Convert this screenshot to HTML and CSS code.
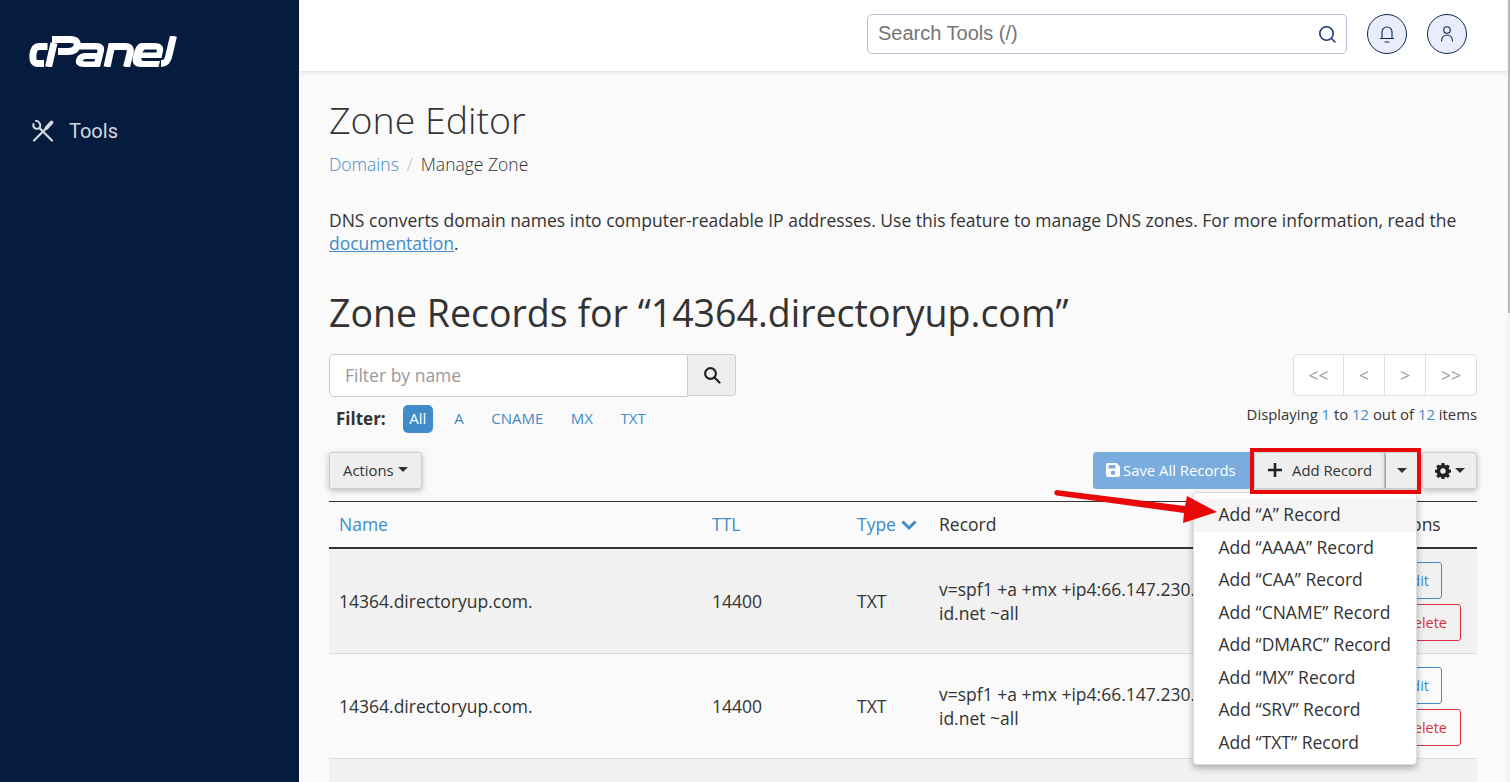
FILE: index.html
```html
<!DOCTYPE html>
<html lang="en">
<head>
<meta charset="utf-8">
<title>Zone Editor</title>
<link rel="stylesheet" href="styles.css">
</head>
<body>
<div class="app">
  <aside class="sidebar">
    <div class="logo">
      <svg width="148" height="31" viewBox="0 0 148 31" fill="none" stroke="#fff" stroke-width="7">
        <path d="M18.500 10.500H10C6 10.500 4.500 13.500 3.900 19C3.500 25 5 27.500 9 27.500H15"/>
        <path d="M19.500 31 25 7"/>
        <path d="M23 3.500H41C47 3.500 49 6 48 10C47 13.500 44 15.500 39 15.500H29"/>
        <path stroke="none" fill="#fff" fill-rule="evenodd" d="M50 7H67C73 7 76 10 75 15L71 31H55C49 31 46 28 47 24C48 19.500 52 17 57 17H68L68.500 15C68.700 14 68 13.500 67 13.500H48.500ZM57 23C55 23 54 23.800 54 24.500C54 25 54.500 25.500 56 25.500H65.500L66 23Z"/>
        <path d="M78 31 82.500 10.500H96C101 10.500 102 13 101 17L97.500 31"/>
        <path stroke="none" fill="#fff" fill-rule="evenodd" d="M113 7H125C132 7 135 10 134 15L132.500 22H112.500C112 24 113 25 115 25H131L129.500 31H112C105 31 102.500 27 104 20C106 11 109 7 113 7ZM113.500 16.500H127.500L127.800 15C128 14 127.500 13.500 126 13.500H116.500C115 13.500 114 15 113.500 16.500Z"/>
        <path d="M144.500 0 140 19C139 25 137 27.500 132 27.500"/>
      </svg>
    </div>
    <nav class="nav-item">
      <svg class="nav-icon" width="24" height="24" viewBox="0 0 24 24" fill="none" stroke="#d5d9e0" stroke-width="2.200" stroke-linecap="round">
        <path d="M8.500 9 21 21.500"/>
        <path d="M2.500 5C1.500 8.500 5 11 8.500 9.200C10.500 6 8.500 2 5 1.800" stroke-width="2"/>
        <path d="M3 21.500 15 9.500"/>
        <path d="M15.500 9 20.500 3.500" stroke-width="3.800"/>
      </svg>
      <span class="nav-label">Tools</span>
    </nav>
  </aside>
  <div class="main">
    <header class="topbar">
      <div class="search-tools">
        <span class="search-text">Search Tools (/)</span>
        <svg width="20" height="20" viewBox="0 0 20 20" fill="none" stroke="#1d3a73" stroke-width="1.600" stroke-linecap="round"><circle cx="9.500" cy="9.500" r="6.700"/><path d="m14.500 14.500 3.500 3.500"/></svg>
      </div>
      <div class="round-btn">
        <svg width="18" height="20" viewBox="0 0 18 20" fill="none" stroke="#10284f" stroke-width="1.100" stroke-linecap="round"><path d="M4 14V8a5 5 0 0 1 10 0v6M2.500 14.500h13M7 18h4"/></svg>
      </div>
      <div class="round-btn">
        <svg width="18" height="20" viewBox="0 0 18 20" fill="none" stroke="#10284f" stroke-width="1.100" stroke-linecap="round"><circle cx="9" cy="6" r="3.300"/><path d="M3.500 17c.3-4 2.500-6 5.500-6s5.200 2 5.500 6"/></svg>
      </div>
    </header>
    <main class="content">
      <h1 class="page-title">Zone Editor</h1>
      <div class="breadcrumb"><a class="crumb-link">Domains</a><span class="crumb-sep">/</span><span>Manage Zone</span></div>
      <p class="intro">DNS converts domain names into computer-readable IP addresses. Use this feature to manage DNS zones. For more information, read the <a class="doc-link">documentation</a>.</p>
      <h2 class="zone-title">Zone Records for “14364.directoryup.com”</h2>

      <div class="filter-row">
        <div class="filter-left">
          <div class="filter-input-group">
            <div class="filter-input">Filter by name</div>
            <div class="filter-search">
              <svg width="18" height="18" viewBox="0 0 18 18" fill="none" stroke="#222" stroke-width="2.200" stroke-linecap="round"><circle cx="7.500" cy="7.500" r="5.400"/><path d="m11.500 11.500 5 5"/></svg>
            </div>
          </div>
          <div class="filter-types">
            <strong class="filter-label">Filter:</strong>
            <span class="pill active">All</span>
            <span class="pill">A</span>
            <span class="pill">CNAME</span>
            <span class="pill">MX</span>
            <span class="pill">TXT</span>
          </div>
        </div>
        <div class="filter-right">
          <div class="pager"><span>&lt;&lt;</span><span>&lt;</span><span>&gt;</span><span>&gt;&gt;</span></div>
          <div class="displaying">Displaying <span class="num">1</span> to <span class="num">12</span> out of <span class="num">12</span> items</div>
        </div>
      </div>

      <div class="toolbar">
        <button class="btn shadow">Actions <i class="caret"></i></button>
        <div class="toolbar-right">
          <button class="btn btn-save">
            <svg width="14" height="14" viewBox="0 0 14 14"><path fill="#fff" fill-rule="evenodd" d="M2 0h8.500L14 3.500V12a2 2 0 0 1-2 2H2a2 2 0 0 1-2-2V2a2 2 0 0 1 2-2zm.5 2v3.500h7V2zM7 7.500a2.200 2.200 0 1 0 0 4.400 2.200 2.200 0 0 0 0-4.400z"/></svg>
            Save All Records
          </button>
          <div class="add-group">
            <button class="btn btn-add">
              <svg width="14" height="14" viewBox="0 0 14 14"><path fill="#222" d="M5.700 0h2.600v5.700H14v2.600H8.300V14H5.700V8.300H0V5.700h5.700z"/></svg>
              <span>Add Record</span>
            </button>
            <button class="btn btn-split"><i class="caret"></i></button>
          </div>
          <button class="btn btn-gear shadow">
            <svg width="16" height="16" viewBox="0 0 16 16"><path fill="#222" fill-rule="evenodd" d="M6.600 0h2.800l.4 2.100 1.200.5L12.800 1.400l2 2-1.200 1.800.5 1.200 2 .4v2.800l-2 .4-.5 1.200 1.200 1.800-2 2-1.800-1.200-1.200.5-.4 2.100H6.600l-.4-2.100-1.200-.5-1.800 1.200-2-2 1.200-1.800-.5-1.200-2-.4V6.800l2-.4.500-1.200L1.200 3.400l2-2L5 2.600l1.200-.5zM8 5.300a2.700 2.700 0 1 0 0 5.400 2.700 2.700 0 0 0 0-5.400z"/></svg>
            <i class="caret"></i>
          </button>
        </div>
      </div>

      <table class="records">
        <colgroup><col class="c-name"><col class="c-ttl"><col class="c-type"><col class="c-rec"><col class="c-act"></colgroup>
        <thead>
          <tr>
            <th class="link">Name</th>
            <th class="link">TTL</th>
            <th class="link">Type <svg width="16" height="12" viewBox="0 0 16 12" class="chev"><path fill="none" stroke="#428bca" stroke-width="3" d="m1.500 2.500 6.500 6.500 6.500-6.500"/></svg></th>
            <th>Record</th>
            <th class="th-act">Actions</th>
          </tr>
        </thead>
        <tbody>
          <tr class="odd">
            <td>14364.directoryup.com.</td><td>14400</td><td>TXT</td>
            <td>v=spf1 +a +mx +ip4:66.147.230.18 +include:spf.<br>id.net ~all</td>
            <td class="acts"><span class="mini edit">Edit</span><span class="mini del">Delete</span></td>
          </tr>
          <tr>
            <td>14364.directoryup.com.</td><td>14400</td><td>TXT</td>
            <td>v=spf1 +a +mx +ip4:66.147.230.18 +include:spf.<br>id.net ~all</td>
            <td class="acts"><span class="mini edit">Edit</span><span class="mini del">Delete</span></td>
          </tr>
          <tr class="odd">
            <td></td><td></td><td></td><td></td>
            <td class="acts"><span class="mini edit"></span></td>
          </tr>
        </tbody>
      </table>

      <div class="menu">
        <div class="menu-item hover">Add “A” Record</div>
        <div class="menu-item">Add “AAAA” Record</div>
        <div class="menu-item">Add “CAA” Record</div>
        <div class="menu-item">Add “CNAME” Record</div>
        <div class="menu-item">Add “DMARC” Record</div>
        <div class="menu-item">Add “MX” Record</div>
        <div class="menu-item">Add “SRV” Record</div>
        <div class="menu-item">Add “TXT” Record</div>
      </div>
      <div class="highlight-box"></div>
      <svg class="arrow" width="170" height="40" viewBox="0 0 170 40"><path fill="#e90808" d="M2.500 1 131 17l2-10 30 16-34 11 1-10L2.500 6.500a2.800 2.800 0 0 1 0-5.500z"/></svg>
    </main>
    <div class="scroll-track"><div class="scroll-thumb"></div></div>
  </div>
</div>
</body>
</html>
```
FILE: styles.css
```css
* { box-sizing: border-box; }
html, body { margin: 0; height: 100%; overflow: hidden; }
body { font-family: "Open Sans", sans-serif; color: #333; background: #fafafa; }
.app { display: flex; height: 782px; }
.sidebar { width: 299px; flex: none; background: #061c3f; padding: 36px 0 0 29px; }
.logo { height: 31px; display: flex; }
.nav-item { display: flex; align-items: center; margin-top: 52px; }
.nav-icon { margin-left: 2px; }
.nav-label { margin-left: 14px; font: 20px Roboto, sans-serif; color: #d5d9e0; }
.main { flex: 1; min-width: 0; position: relative; overflow: hidden; }
.scroll-track { position: absolute; top: 0; right: 0; bottom: 0; width: 3px; background: #f4f4f4; z-index: 6; }
.scroll-thumb { margin-left: 1px; height: 313px; background: #b9b9b9; }
.topbar { height: 71px; background: #fff; box-shadow: 0 1px 4px rgba(0,0,0,.12); display: flex; align-items: center; justify-content: flex-end; padding: 0 43px 4px 0; gap: 20px; position: relative; z-index: 2; }
.search-tools { width: 480px; height: 40px; border: 1px solid #b4bfd6; border-radius: 5px; display: flex; align-items: center; justify-content: space-between; padding: 0 9px 0 10px; }
.search-text { font: 20px "Liberation Sans", sans-serif; color: #757575; }
.round-btn { width: 40px; height: 40px; border-radius: 50%; border: 1px solid #10284f; background: #e9edfb; display: flex; align-items: center; justify-content: center; }
.content { padding: 23px 33px 0 30px; position: relative; }
.page-title { margin: 0; font-size: 37.500px; font-weight: 300; line-height: 52px; height: 52px; }
.breadcrumb { margin-top: 6px; font-size: 17.500px; font-weight: 300; line-height: 24px; }
.crumb-link { color: #428bca; }
.crumb-sep { color: #bbb; margin: 0 8px; }
.intro { margin: 33px 0 0; font-size: 17.500px; line-height: 23px; height: 46px; }
.doc-link { color: #428bca; text-decoration: underline; }
.zone-title { margin: 32px 0 0; font-size: 37.500px; font-weight: 400; line-height: 52px; }
.filter-row { display: flex; justify-content: space-between; margin-top: 15px; height: 98px; }
.filter-input-group { display: flex; }
.filter-input { width: 359px; height: 43px; background: #fff; border: 1px solid #ccc; border-radius: 5px 0 0 5px; padding: 0 15px; font-size: 17.500px; line-height: 41px; color: #999; }
.filter-search { width: 48px; height: 42px; background: #eee; border: 1px solid #ccc; border-left: 0; border-radius: 0 4px 4px 0; display: flex; align-items: center; justify-content: center; }
.filter-types { display: flex; align-items: center; margin: 7px 0 0 7px; height: 29px; gap: 15.500px; }
.filter-label { font-size: 17px; margin-right: 1.500px; }
.pill { font-size: 15px; color: #428bca; padding: 0 6px 2px; line-height: 26px; }
.pill.active { background: #428bca; color: #fff; border-radius: 5px; padding: 0 6.500px 2px; }
.filter-right { display: flex; flex-direction: column; align-items: flex-end; }
.pager { display: flex; width: 184px; height: 42px; background: #fff; border: 1px solid #ddd; border-radius: 5px; }
.pager span { flex: 41; display: flex; align-items: center; justify-content: center; color: #999; font-size: 17.500px; border-left: 1px solid #ddd; }
.pager span:first-child { flex: 50; border-left: 0; }
.pager span:last-child { flex: 51; }
.displaying { margin-top: 8px; font-size: 14.875px; line-height: 20px; }
.num { color: #428bca; }
.toolbar { display: flex; justify-content: space-between; height: 36px; }
.toolbar-right { display: flex; gap: 4px; }
.btn { height: 37px; font-family: inherit; font-size: 14.875px; color: #333; background: #eee; border: 1px solid #ccc; border-radius: 3px; padding: 0 13px 2px; display: inline-flex; align-items: center; gap: 4px; white-space: nowrap; }
.shadow { box-shadow: 0 2px 6px rgba(0,0,0,.25); }
.caret { display: inline-block; width: 0; height: 0; border-left: 5px solid transparent; border-right: 5px solid transparent; border-top: 5px solid #333; }
.btn-save { background: #7aaddd; border-color: #7aaddd; color: #fff; width: 157px; padding: 0 0 2px 12px; border-radius: 3px 0 0 3px; gap: 3px; }
.add-group { display: flex; }
.btn-add { width: 131px; border-radius: 3px 0 0 3px; padding: 0 0 2px 13px; gap: 10px; box-shadow: 0 2px 5px rgba(0,0,0,.2); }
.btn-split { width: 33px; padding: 0; justify-content: center; border-left-color: #aaa; border-radius: 0 3px 3px 0; box-shadow: 0 2px 5px rgba(0,0,0,.2); }
.btn-gear { width: 55px; padding: 0 0 0 12px; gap: 4px; }
.records { width: 100%; margin-top: 13px; border-collapse: collapse; table-layout: fixed; font-size: 17.500px; }
.c-name { width: 373px; } .c-ttl { width: 145px; } .c-type { width: 82px; } .c-act { width: 120px; }
.records thead tr { border-top: 1px solid #333; border-bottom: 2px solid #333; }
.records th { text-align: left; font-weight: 400; height: 46px; padding: 0 10px; white-space: nowrap; }
.records th.link { color: #428bca; }
.records th.th-act { padding-left: 24px; }
.chev { margin-left: 0; }
.records td { height: 105px; padding: 0 16px 0 10px; border-bottom: 1px solid #ddd; white-space: nowrap; }
.records tbody tr:first-child td { height: 106px; padding-top: 1px; }
.records tbody tr.odd { background: #f1f1f1; }
.mini { display: block; margin-left: auto; height: 37px; line-height: 35px; border: 1px solid; border-radius: 3px; font-size: 14.500px; text-align: right; }
.mini.edit { width: 72px; color: #428bca; border-color: #428bca; margin-right: 19px; padding-right: 12px; }
.mini.del { width: 91px; color: #d9343f; border-color: #d9343f; margin-top: 5px; padding-right: 13px; }
.menu { position: absolute; left: 894px; top: 421px; width: 224px; height: 273px; background: #fff; border: 1px solid #ddd; border-radius: 4px; box-shadow: 0 3px 7px rgba(0,0,0,.3); padding-top: 6px; z-index: 3; }
.menu-item { font-size: 17.500px; height: 32.500px; line-height: 30.500px; padding: 0 0 2px 24.500px; white-space: nowrap; }
.menu-item.hover { background: #f5f5f5; }
.highlight-box { position: absolute; left: 951px; top: 377px; width: 171px; height: 46px; border: 4px solid #e90808; z-index: 4; }
.arrow { position: absolute; left: 755px; top: 418px; z-index: 5; }
```
